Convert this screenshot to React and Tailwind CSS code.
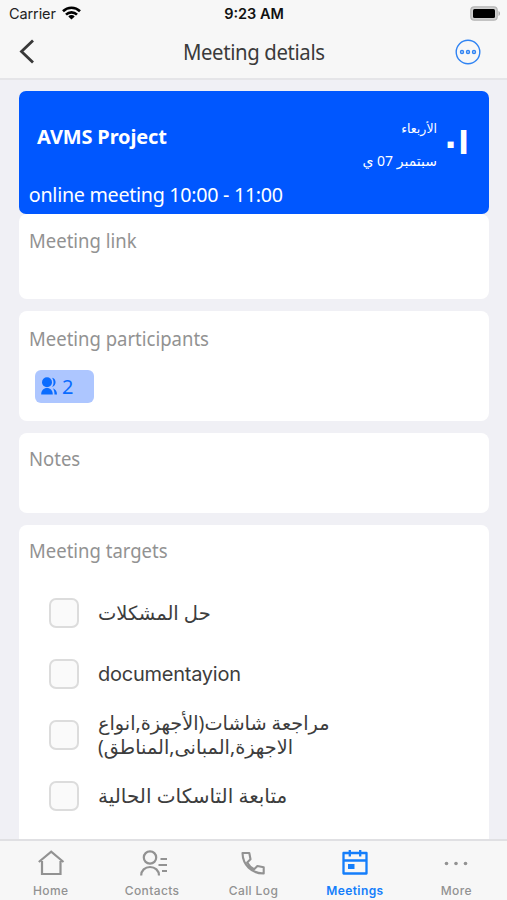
import clsx from 'clsx';

const targets = [
  { id: 1, text: 'حل المشكلات', className: 'text-[19.5px]', rtl: true },
  { id: 2, text: 'documentayion', className: "font-['Inter','Liberation_Sans',sans-serif] text-[20px] tracking-[-0.25px]" },
  { id: 3, text: 'مراجعة شاشات(الأجهزة,انواع\nالاجهزة,المبانى,المناطق)', className: 'text-[19.3px] text-left', rtl: true },
  { id: 4, text: 'متابعة التاسكات الحالية', className: 'text-[20px]', rtl: true }
];

const HomeIcon = () => (
  <svg width="28" height="28" viewBox="0 0 28 28" fill="none" stroke="currentColor" strokeWidth="2.200">
    <path d="M5 12v13h18.500V12M1.800 13 14.200 2.600 26.500 13" />
  </svg>
);

const ContactsIcon = () => (
  <svg className="ml-[3px]" width="28" height="28" viewBox="0 0 28 28" fill="none" stroke="currentColor" strokeWidth="2.200">
    <circle cx="10" cy="8.500" r="6.200" />
    <path d="M1.200 26.500c0-5 3.700-8.500 8.800-8.500s9 3.500 9 8.500M20.500 10h6.500M18.500 16H27M22 22h5" />
  </svg>
);

const CallIcon = () => (
  <svg width="28" height="28" viewBox="0 0 28 28" fill="none" stroke="currentColor" strokeWidth="2.100" strokeLinejoin="round">
    <path d="M3.500 4h6.800l1.200 6.300-3.300 3.200c1.700 3.100 3.800 5.200 6.900 6.800l3.300-3.300 6.300 1.200v6.300C12.500 24.500 3.800 16 3.500 4Z" />
  </svg>
);

const MeetingsIcon = () => (
  <svg width="28" height="28" viewBox="0 0 28 28" fill="none" stroke="currentColor" strokeWidth="2.300" strokeLinejoin="round">
    <path d="M2.500 4h23v20.500h-23zM2.500 11.500h23M8.800 1v6.500M19.200 1v6.500" />
    <path d="M7 15h6.500v5H7z" fill="currentColor" stroke="none" />
  </svg>
);

const MoreIcon = () => (
  <svg width="28" height="28" viewBox="0 0 28 28" fill="currentColor">
    <circle cx="4.500" cy="14.500" r="1.800" />
    <circle cx="14" cy="14.500" r="1.800" />
    <circle cx="23.500" cy="14.500" r="1.800" />
  </svg>
);

const tabs = [
  { label: 'Home', icon: HomeIcon },
  { label: 'Contacts', icon: ContactsIcon },
  { label: 'Call Log', icon: CallIcon },
  { label: 'Meetings', icon: MeetingsIcon, active: true },
  { label: 'More', icon: MoreIcon }
];

const StatusBar = () => (
  <div className="grid h-[27px] grid-cols-3 items-center pl-[9px] pr-[6px] font-['Inter','Liberation_Sans',sans-serif] text-[14.500px] text-[#222]">
    <div className="flex items-center gap-[6px]">
      <span className="tracking-[-0.1px]">Carrier</span>
      <svg className="-mt-[2px]" width="19" height="14" viewBox="0 0 19 14" fill="none" stroke="#000" strokeWidth="2.600">
        <path d="M1 5.200a12.200 12.200 0 0 1 17 0M4 8.600a7.800 7.800 0 0 1 11 0" />
        <path d="M9.500 13.500 6.300 10.400a4.600 4.600 0 0 1 6.400 0Z" fill="#000" stroke="none" />
      </svg>
    </div>
    <span className="-ml-[2px] text-center font-semibold text-[#111]">9:23 AM</span>
    <svg className="-mt-px justify-self-end" width="31" height="15" viewBox="0 0 31 15">
      <rect x=".8" y=".8" width="26.400" height="13.400" rx="3.500" fill="#d0d0d0" stroke="#b5b5b5" strokeWidth="1.200" />
      <rect x="3" y="3" width="22" height="9" rx="1.500" fill="#000" />
      <path d="M28.500 5v5c2-.8 2-4.200 0-5Z" fill="#aaa" />
    </svg>
  </div>
);

const Header = () => (
  <header className="shrink-0 border-b-2 border-[#e5e5e8] bg-[#f7f7f7]">
    <StatusBar />
    <div className="flex h-[51px] items-center justify-between pb-[2px] pl-[19px] pr-[26px]">
      <button>
        <svg width="16" height="25" viewBox="0 0 16 25" fill="none" stroke="#383838" strokeWidth="2.800">
          <path d="M14 1.500 2.500 12.500 14 23.500" />
        </svg>
      </button>
      <h1 className="scale-x-[0.97] pl-[18px] text-[21px] leading-7 tracking-[-0.4px] text-[#3b3b3b]">Meeting detials</h1>
      <button>
        <svg width="26" height="26" viewBox="0 0 26 26" fill="none" stroke="#2f83f3" strokeWidth="1.400">
          <circle cx="13" cy="13" r="11.800" />
          <circle cx="7" cy="13" r="1.500" />
          <circle cx="13" cy="13" r="1.500" />
          <circle cx="19" cy="13" r="1.500" />
        </svg>
      </button>
    </div>
  </header>
);

const Card = ({ title, className, children }) => (
  <section className={clsx('shrink-0 rounded-lg bg-white pl-[10px]', className)}>
    <h2 className="origin-left scale-x-[0.925] text-[20px] leading-7 text-[#929292]">{title}</h2>
    {children}
  </section>
);

const App = () => {
  return (
    <div className="flex h-[900px] w-[507px] flex-col overflow-hidden bg-[#f0f0f5] font-['Noto_Sans','DejaVu_Sans',sans-serif]">
      <Header />

      <main className="flex min-h-0 flex-1 flex-col overflow-hidden pl-[19px] pr-[18px] pt-[11px]">
        {/* Meeting banner */}
        <section className="flex h-[123px] shrink-0 flex-col rounded-[7px] bg-[#0057ff] text-white">
          <div className="flex h-[90px] justify-between pl-[18px] pr-[20px]">
            <p className="pt-[32px] text-[20px] font-bold leading-7 tracking-[-0.15px]">AVMS Project</p>
            <div className="flex">
              <div className="pt-[28px] text-right" dir="rtl">
                <p className="text-[12.500px] leading-5">الأربعاء</p>
                <p className="mt-[12px] text-[14px] leading-5">سبتمبر 07 ي</p>
              </div>
              <p className="flex w-[32px] justify-end gap-[2px] pt-[36px] font-bold leading-8">
                <span className="-mt-[9px] font-['Liberation_Sans',sans-serif] text-[42px]">.</span>
                <span className="font-['DejaVu_Sans',sans-serif] text-[31px]">ا</span>
              </p>
            </div>
          </div>
          <p className="origin-left scale-x-[0.985] pl-[10px] text-[20px] leading-7 tracking-[-0.3px]">online meeting 10:00 - 11:00</p>
        </section>

        <Card title="Meeting link" className="h-[85px] pt-[13px]" />

        <Card title="Meeting participants" className="mt-[12px] h-[110px] pt-[14px]">
          <div className="ml-[6px] mt-[17px] flex h-[33px] w-[59px] items-center gap-[5px] rounded-[6px] bg-[#adc6ff] pl-[6px] text-[#0a6cff]">
            <svg className="-mt-[2px]" width="16" height="18" viewBox="0 0 16 18" fill="currentColor">
              <circle cx="6" cy="5.300" r="5" />
              <path d="M.2 17.500c0-4 2.400-6.500 5.800-6.500s5.800 2.500 5.800 6.500ZM11 .8c4.800.7 4.800 8.200 0 9.200 2-2.300 2-6.700 0-9.200ZM11.800 11.300c2.700.8 4.200 3.300 4.200 6.200h-2.500c0-2.300-.5-4.700-1.700-6.200Z" />
            </svg>
            <span className="text-[20px] leading-7">2</span>
          </div>
        </Card>

        <Card title="Notes" className="mt-[12px] h-[80px] pt-[12px]" />

        <Card title="Meeting targets" className="mt-[12px] h-[340px] pt-[12px]">
          <ul className="pl-[20px] pt-[17px]">
            {targets.map((target) => (
              <li key={target.id} className="flex h-[61px] items-center gap-[19px]">
                <span className="size-[30px] shrink-0 rounded-[7px] border-[2.500px] border-[#dcdcdc] bg-[#fafafa]" />
                <span
                  dir={target.rtl ? 'rtl' : 'ltr'}
                  className={clsx('whitespace-pre leading-6 text-[#3d3d3d]', target.className)}
                >
                  {target.text}
                </span>
              </li>
            ))}
          </ul>
        </Card>
      </main>

      {/* Bottom tabs */}
      <nav className="grid h-[61px] shrink-0 grid-cols-5 border-t-2 border-[#e0e0e3] bg-[#f7f7f7]">
        {tabs.map(({ label, icon: Icon, active }) => (
          <div
            key={label}
            className={clsx('flex flex-col items-center pt-[8px]', active ? 'text-[#147efb]' : 'text-[#929292]')}
          >
            <Icon />
            <span
              className={clsx(
                "mt-[6px] font-['Inter','Liberation_Sans',sans-serif] text-[12px] leading-4 tracking-[0.4px]",
                active ? 'font-semibold' : 'font-medium'
              )}
            >
              {label}
            </span>
          </div>
        ))}
      </nav>
    </div>
  );
};

export default App;
